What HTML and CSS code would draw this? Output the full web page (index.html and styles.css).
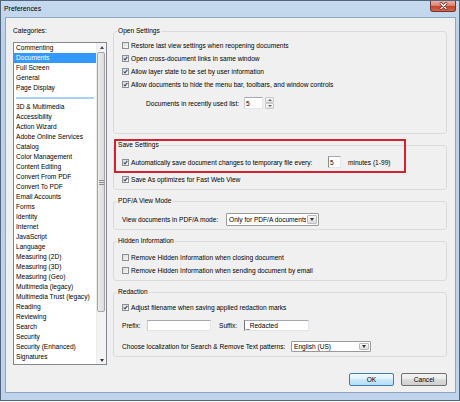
FILE: index.html
```html
<!DOCTYPE html>
<html>
<head>
<meta charset="utf-8">
<title>Preferences</title>
<link rel="stylesheet" href="styles.css">
</head>
<body>
<div class="window">
  <div class="titlebar">
    <span class="title">Preferences</span>
    <div class="close">
      <svg width="9" height="8" viewBox="0 0 9 8"><path d="M2 1.5 L7 6.5 M7 1.5 L2 6.5" stroke="#6b2417" stroke-width="2.6" stroke-linecap="round"/><path d="M2 1.5 L7 6.5 M7 1.5 L2 6.5" stroke="#fff" stroke-width="1.4" stroke-linecap="round"/></svg>
    </div>
  </div>
  <div class="client">
    <div class="main">
      <div class="cats">
        <div class="cats-label">Categories:</div>
        <div class="listbox">
          <ul class="items">
            <li>Commenting</li>
            <li class="sel">Documents</li>
            <li>Full Screen</li>
            <li>General</li>
            <li>Page Display</li>
            <li class="sep"><span></span></li>
            <li>3D &amp; Multimedia</li>
            <li>Accessibility</li>
            <li>Action Wizard</li>
            <li>Adobe Online Services</li>
            <li>Catalog</li>
            <li>Color Management</li>
            <li>Content Editing</li>
            <li>Convert From PDF</li>
            <li>Convert To PDF</li>
            <li>Email Accounts</li>
            <li>Forms</li>
            <li>Identity</li>
            <li>Internet</li>
            <li>JavaScript</li>
            <li>Language</li>
            <li>Measuring (2D)</li>
            <li>Measuring (3D)</li>
            <li>Measuring (Geo)</li>
            <li>Multimedia (legacy)</li>
            <li>Multimedia Trust (legacy)</li>
            <li>Reading</li>
            <li>Reviewing</li>
            <li>Search</li>
            <li>Security</li>
            <li>Security (Enhanced)</li>
            <li>Signatures</li>
          </ul>
          <div class="vscroll">
            <div class="sb-btn"><i class="tri-up"></i></div>
            <div class="sb-track"><div class="sb-thumb"><span class="grip"></span></div></div>
            <div class="sb-btn"><i class="tri-down"></i></div>
          </div>
        </div>
      </div>

      <div class="panel">
        <fieldset class="group g-open">
          <legend>Open Settings</legend>
          <div class="row"><span class="cb"></span>Restore last view settings when reopening documents</div>
          <div class="row"><span class="cb on"><svg viewBox="0 0 5 5"><path d="M0.7 2.5 L2 3.9 L4.3 0.8"/></svg></span>Open cross-document links in same window</div>
          <div class="row"><span class="cb on"><svg viewBox="0 0 5 5"><path d="M0.7 2.5 L2 3.9 L4.3 0.8"/></svg></span>Allow layer state to be set by user information</div>
          <div class="row"><span class="cb on"><svg viewBox="0 0 5 5"><path d="M0.7 2.5 L2 3.9 L4.3 0.8"/></svg></span>Allow documents to hide the menu bar, toolbars, and window controls</div>
          <div class="spinrow">
            <span class="lbl-recent">Documents in recently used list:</span>
            <span class="tb tb-recent">5</span>
            <span class="spin"><span class="spin-b"><i class="tri-up small"></i></span><span class="spin-b"><i class="tri-down small"></i></span></span>
          </div>
        </fieldset>

        <fieldset class="group g-save">
          <legend>Save Settings</legend>
          <div class="row row-auto"><span class="cb on"><svg viewBox="0 0 5 5"><path d="M0.7 2.5 L2 3.9 L4.3 0.8"/></svg></span><span class="lbl-auto">Automatically save document changes to temporary file every:</span><span class="tb tb-min">5</span><span class="minutes">minutes (1-99)</span></div>
          <div class="row row-fast"><span class="cb on"><svg viewBox="0 0 5 5"><path d="M0.7 2.5 L2 3.9 L4.3 0.8"/></svg></span>Save As optimizes for Fast Web View</div>
        </fieldset>

        <fieldset class="group g-pdfa">
          <legend>PDF/A View Mode</legend>
          <div class="row"><span class="lbl-pdfa">View documents in PDF/A mode:</span><span class="combo combo-pdfa"><span class="combo-text">Only for PDF/A documents</span><span class="combo-btn"><i class="tri-down"></i></span></span></div>
        </fieldset>

        <fieldset class="group g-hidden">
          <legend>Hidden Information</legend>
          <div class="row"><span class="cb"></span>Remove Hidden Information when closing document</div>
          <div class="row"><span class="cb"></span>Remove Hidden Information when sending document by email</div>
        </fieldset>

        <fieldset class="group g-red">
          <legend>Redaction</legend>
          <div class="row"><span class="cb on"><svg viewBox="0 0 5 5"><path d="M0.7 2.5 L2 3.9 L4.3 0.8"/></svg></span>Adjust filename when saving applied redaction marks</div>
          <div class="fields">
            <span class="lbl-fix">Prefix:</span><span class="tb tb-fix"></span>
            <span class="lbl-fix lbl-suffix">Suffix:</span><span class="tb tb-fix tb-suffix">_Redacted</span>
          </div>
          <div class="locrow"><span class="lbl-loc">Choose localization for Search &amp; Remove Text patterns:</span><span class="combo combo-loc"><span class="combo-text">English (US)</span><span class="combo-btn"><i class="tri-down"></i></span></span></div>
        </fieldset>

        <div class="callout"></div>
      </div>
    </div>
    <div class="footer">
      <button class="btn btn-default">OK</button>
      <button class="btn btn-cancel">Cancel</button>
    </div>
  </div>
</div>
</body>
</html>
```
FILE: styles.css
```css
* { box-sizing: border-box; }
html, body { margin: 0; padding: 0; }
body {
  width: 460px;
  height: 402px;
  overflow: hidden;
  background: #ffffff;
  font-family: "Liberation Sans", Arial, sans-serif;
  font-size: 6.6px;
  color: #000;
}

.window {
  width: 460px;
  height: 401px;
  border: 1px solid #52657f;
  background: linear-gradient(#c6d9ee, #bad1ea 40px, #bfd4ec);
  padding: 0 3px 7px 4px;
  display: flex;
  flex-direction: column;
}

.titlebar {
  height: 16px;
  display: flex;
  align-items: flex-start;
  flex: none;
}
.title {
  line-height: 16px;
  margin-left: -1px;
  font-size: 6.9px;
  color: #000;
}
.close {
  margin-left: auto;
  width: 26px;
  height: 11px;
  border: 1px solid #7a3427;
  border-top: none;
  border-radius: 0 0 3px 3px;
  background: linear-gradient(#eab0a2, #d98571 45%, #c5452d 55%, #d0684f);
  display: flex;
  align-items: center;
  justify-content: center;
}

.client {
  flex: 1;
  border: 1px solid #8fa6c1;
  background: #f0f0f0;
  padding: 8px 8px 6px 7px;
  display: flex;
  flex-direction: column;
}

.main {
  display: grid;
  grid-template-columns: 94px 334px;
  column-gap: 6px;
  height: 339px;
}

.cats { display: flex; flex-direction: column; }
.cats-label { line-height: 10px; height: 10px; margin-bottom: 6px; }
.listbox {
  height: 323px;
  border: 1px solid #828790;
  background: #fff;
  display: flex;
  overflow: hidden;
}
.items {
  flex: 1;
  list-style: none;
  margin: 0;
  padding: 0;
  min-width: 0;
}
.items li {
  height: 10px;
  line-height: 10px;
  padding-left: 2px;
  white-space: nowrap;
  overflow: hidden;
}
.items li.sel { background: #3399ff; color: #fff; }
.items li.sep {
  height: 9px;
  display: flex;
  align-items: center;
  padding: 0 2px;
}
.items li.sep span {
  display: block;
  width: 100%;
  height: 2px;
  background: #a9d1f5;
}

.vscroll {
  width: 10px;
  flex: none;
  display: flex;
  flex-direction: column;
  background: #f3f3f3;
  border-left: 1px solid #ececec;
}
.sb-btn {
  height: 8px;
  display: flex;
  align-items: center;
  justify-content: center;
}
.sb-track { flex: 1; padding-top: 1px; }
.sb-thumb {
  height: 260px;
  margin: 0 1px 0 0;
  border: 1px solid #a4a4a4;
  border-radius: 2px;
  background: linear-gradient(to right, #ececec, #dcdcdc);
  display: flex;
  align-items: center;
  justify-content: center;
}
.grip {
  width: 5px;
  height: 5px;
  background: repeating-linear-gradient(#8e8e8e 0 1px, transparent 1px 2px);
}

.tri-up {
  display: block;
  width: 0; height: 0;
  border-left: 2.5px solid transparent;
  border-right: 2.5px solid transparent;
  border-bottom: 3px solid #4a4a4a;
}
.tri-down {
  display: block;
  width: 0; height: 0;
  border-left: 2.5px solid transparent;
  border-right: 2.5px solid transparent;
  border-top: 3px solid #333;
}
.tri-up.small { border-left-width: 2px; border-right-width: 2px; border-bottom-width: 2px; border-bottom-color: #666; }
.tri-down.small { border-left-width: 2px; border-right-width: 2px; border-top-width: 2px; border-top-color: #666; }

.panel {
  position: relative;
  display: flex;
  flex-direction: column;
  gap: 6px;
}

.group {
  margin: 0;
  min-width: 0;
  border: 1px solid #d8dcdf;
  border-radius: 3px;
  padding: 0 8px;
}
.group legend {
  padding: 0 1px;
  margin-left: -5px;
  height: 10px;
  line-height: 10px;
}
.g-open { padding-top: 3px; padding-bottom: 24px; }
.g-save { padding-top: 6px; padding-bottom: 3px; }
.g-pdfa { padding-top: 7px; padding-bottom: 3px; }
.g-hidden { padding-top: 5px; padding-bottom: 3px; }
.g-red { padding-top: 4px; padding-bottom: 4px; }

.row {
  display: flex;
  align-items: center;
  height: 13px;
  white-space: nowrap;
}
.cb {
  flex: none;
  width: 7px;
  height: 7px;
  margin-right: 2px;
  border: 1px solid #8e8f8f;
  background: linear-gradient(135deg, #d8d8d8, #f9f9f9);
  display: flex;
  align-items: center;
  justify-content: center;
}
.cb svg { width: 5px; height: 5px; display: block; }
.cb svg path { fill: none; stroke: #34466e; stroke-width: 1.1; }

.spinrow {
  display: flex;
  align-items: center;
  height: 12px;
  margin-top: 6px;
  padding-left: 24px;
  white-space: nowrap;
}
.lbl-recent { width: 98px; flex: none; }
.tb {
  display: flex;
  align-items: center;
  flex: none;
  background: #fff;
  border: 1px solid #e2e5ea;
  border-top-color: #a6a9af;
  border-left-color: #c9ccd2;
  padding-left: 1px;
  white-space: nowrap;
}
.tb-recent { width: 19px; height: 12px; }
.spin {
  display: flex;
  flex-direction: column;
  width: 9px;
  height: 12px;
  margin-left: 2px;
}
.spin-b {
  flex: 1;
  border: 1px solid #c8c8c8;
  border-radius: 1px;
  background: linear-gradient(#f7f7f7, #e4e4e4);
  display: flex;
  align-items: center;
  justify-content: center;
}

.row-auto { height: 12px; }
.row-fast { margin-top: 5px; }
.lbl-auto { width: 197px; flex: none; }
.tb-min { width: 13px; height: 12px; border-left-color: #8a8d93; }
.minutes { margin-left: 7px; }

.lbl-pdfa { width: 104px; flex: none; }
.combo {
  display: flex;
  align-items: stretch;
  flex: none;
  background: #fff;
  border: 1px solid #9a9a9a;
  border-radius: 1px;
}
.combo-text {
  flex: 1;
  display: flex;
  align-items: center;
  padding-left: 2px;
  white-space: nowrap;
  overflow: hidden;
}
.combo-btn {
  width: 10px;
  margin: 1px;
  border: 1px solid #bcbcbc;
  border-radius: 1px;
  background: linear-gradient(#f8f8f8, #dcdcdc);
  display: flex;
  align-items: center;
  justify-content: center;
}
.combo-pdfa { width: 93px; height: 13px; }

.fields {
  display: flex;
  align-items: center;
  height: 11px;
  margin-top: 6px;
}
.lbl-fix { width: 25px; flex: none; }
.lbl-suffix { margin-left: 8px; }
.tb-fix { width: 64px; height: 11px; }
.tb-suffix { width: 65px; border-left-color: #6f7278; }

.locrow {
  display: flex;
  align-items: center;
  height: 11px;
  margin-top: 10px;
  white-space: nowrap;
}
.lbl-loc { width: 169px; flex: none; }
.combo-loc { width: 80px; height: 11px; }

.callout {
  position: absolute;
  top: 113px;
  left: 1px;
  width: 292px;
  height: 34px;
  border: 2px solid #d3232e;
  pointer-events: none;
}

.footer {
  margin-top: 8px;
  display: flex;
  justify-content: flex-end;
  gap: 7px;
}
.btn {
  height: 13px;
  padding: 0;
  font-family: inherit;
  font-size: 6.6px;
  color: #000;
  border: 1px solid #707070;
  border-radius: 2px;
  background: linear-gradient(#f2f2f2, #ebebeb 50%, #dddddd 50%, #cfcfcf);
}
.btn-default {
  width: 45px;
  border-color: #3c7fb1;
  background: linear-gradient(#eef7fd, #e0f1fb 50%, #cbe8fa 50%, #b8dff6);
}
.btn-cancel { width: 46px; }
```
